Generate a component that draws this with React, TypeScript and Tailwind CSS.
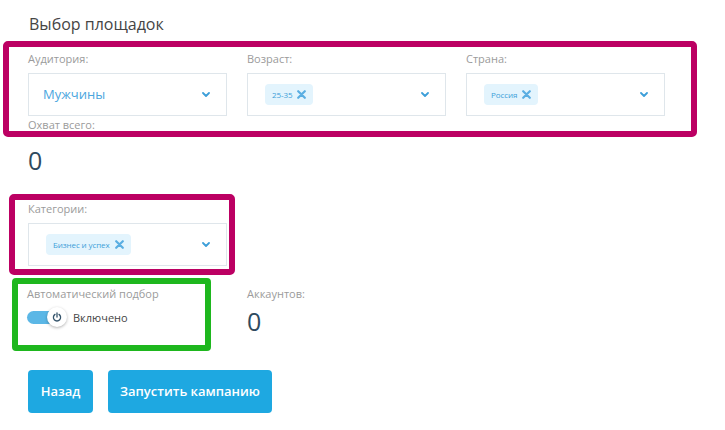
import React from "react";

const Chevron = () => (
  <svg width="8" height="5" viewBox="0 0 8 5" className="shrink-0">
    <polyline points="1,1 4,4 7,1" fill="none" stroke="#3d9fd9" strokeWidth="1.8" strokeLinecap="round" strokeLinejoin="round" />
  </svg>
);

const XIcon = () => (
  <svg width="9" height="9" viewBox="0 0 9 9" className="shrink-0">
    <path d="M1.2 1.2 L7.8 7.8 M7.8 1.2 L1.2 7.8" stroke="#5aaee2" strokeWidth="2.2" strokeLinecap="round" />
  </svg>
);

const Chip = ({ text }: { text: string }) => (
  <div className="flex items-center h-[21px] rounded-[4px] bg-[#e3f4fd] pl-[7px] pr-[7px] gap-[5px]">
    <span className="text-[8px] leading-none text-[#3d9fd9] tracking-[-0.1px]">{text}</span>
    <XIcon />
  </div>
);

const Label = ({ children }: { children: React.ReactNode }) => (
  <div className="text-[11px] leading-[15px] text-[#9b9b9b]">{children}</div>
);

const SelectBox = ({ children }: { children: React.ReactNode }) => (
  <div className="w-[199px] h-[43px] border border-[#dfe6eb] bg-white flex items-center justify-between pl-[17px] pr-[16px]">
    {children}
    <Chevron />
  </div>
);

const Zero = () => (
  <div className="text-[25px] leading-[30px] text-[#2e4a5e]">0</div>
);

export default function App() {
  return (
    <div className="w-[725px] h-[430px] bg-white overflow-hidden font-['Open_Sans',sans-serif]">
      <div className="pl-[29px] pt-[13px] text-[16px] leading-[22px] text-[#454545]">Выбор площадок</div>

      <div className="ml-[3px] mt-[6px] w-[694px] h-[96px] border-[6px] border-[#bc0063] rounded-[5px] pl-[19px] pt-[4px]">
        <div className="grid grid-cols-[199px_199px_199px] gap-x-[20px]">
          <div>
            <Label>Аудитория:</Label>
            <div className="mt-[7px]">
              <div className="w-[199px] h-[43px] border border-[#dfe6eb] bg-white flex items-center justify-between pl-[14px] pr-[16px]">
                <span className="text-[13px] text-[#4aa6de]">Мужчины</span>
                <Chevron />
              </div>
            </div>
          </div>
          <div>
            <Label>Возраст:</Label>
            <div className="mt-[7px]">
              <SelectBox>
                <Chip text="25-35" />
              </SelectBox>
            </div>
          </div>
          <div>
            <Label>Страна:</Label>
            <div className="mt-[7px]">
              <SelectBox>
                <Chip text="Россия" />
              </SelectBox>
            </div>
          </div>
        </div>
        <div className="mt-[1px]">
          <Label>Охват всего:</Label>
        </div>
      </div>

      <div className="ml-[28px] mt-[8px]">
        <Zero />
      </div>

      <div className="ml-[9px] mt-[19px] w-[226px] h-[81px] border-[6px] border-[#bc0063] rounded-[5px] pl-[13px] pt-[1px]">
        <Label>Категории:</Label>
        <div className="mt-[7px]">
          <SelectBox>
            <Chip text="Бизнес и успех" />
          </SelectBox>
        </div>
      </div>

      <div className="flex mt-[3px]">
        <div className="ml-[12px] w-[199px] h-[73px] border-[6px] border-[#1eb71e] rounded-[4px] pl-[9px] pt-[2px]">
          <Label>Автоматический подбор</Label>
          <div className="mt-[6px] flex items-center">
            <div className="relative w-[40px] h-[20px] flex items-center">
              <div className="w-[34px] h-[13px] rounded-full bg-[#5bb7e6]" />
              <div className="absolute left-[20px] top-0 w-[20px] h-[20px] rounded-full bg-white shadow-[0_1px_3px_rgba(0,0,0,0.3)] flex items-center justify-center">
                <svg width="10" height="10" viewBox="0 0 10 10">
                  <path d="M3 2.4 A3.6 3.6 0 1 0 7 2.4" fill="none" stroke="#34536a" strokeWidth="1.3" strokeLinecap="round" />
                  <line x1="5" y1="1" x2="5" y2="5" stroke="#34536a" strokeWidth="1.3" strokeLinecap="round" />
                </svg>
              </div>
            </div>
            <span className="ml-[6px] text-[11px] leading-[15px] text-[#454545]">Включено</span>
          </div>
        </div>
        <div className="ml-[36px] pt-[8px]">
          <Label>Аккаунтов:</Label>
          <div className="mt-[5px]">
            <Zero />
          </div>
        </div>
      </div>

      <div className="flex ml-[28px] mt-[19px] gap-[15px]">
        <button className="w-[65px] h-[43px] rounded-[4px] bg-[#1ea8e1] text-white text-[13px] font-semibold">Назад</button>
        <button className="w-[164px] h-[43px] rounded-[4px] bg-[#1ea8e1] text-white text-[13px] font-semibold">Запустить кампанию</button>
      </div>
    </div>
  );
}
